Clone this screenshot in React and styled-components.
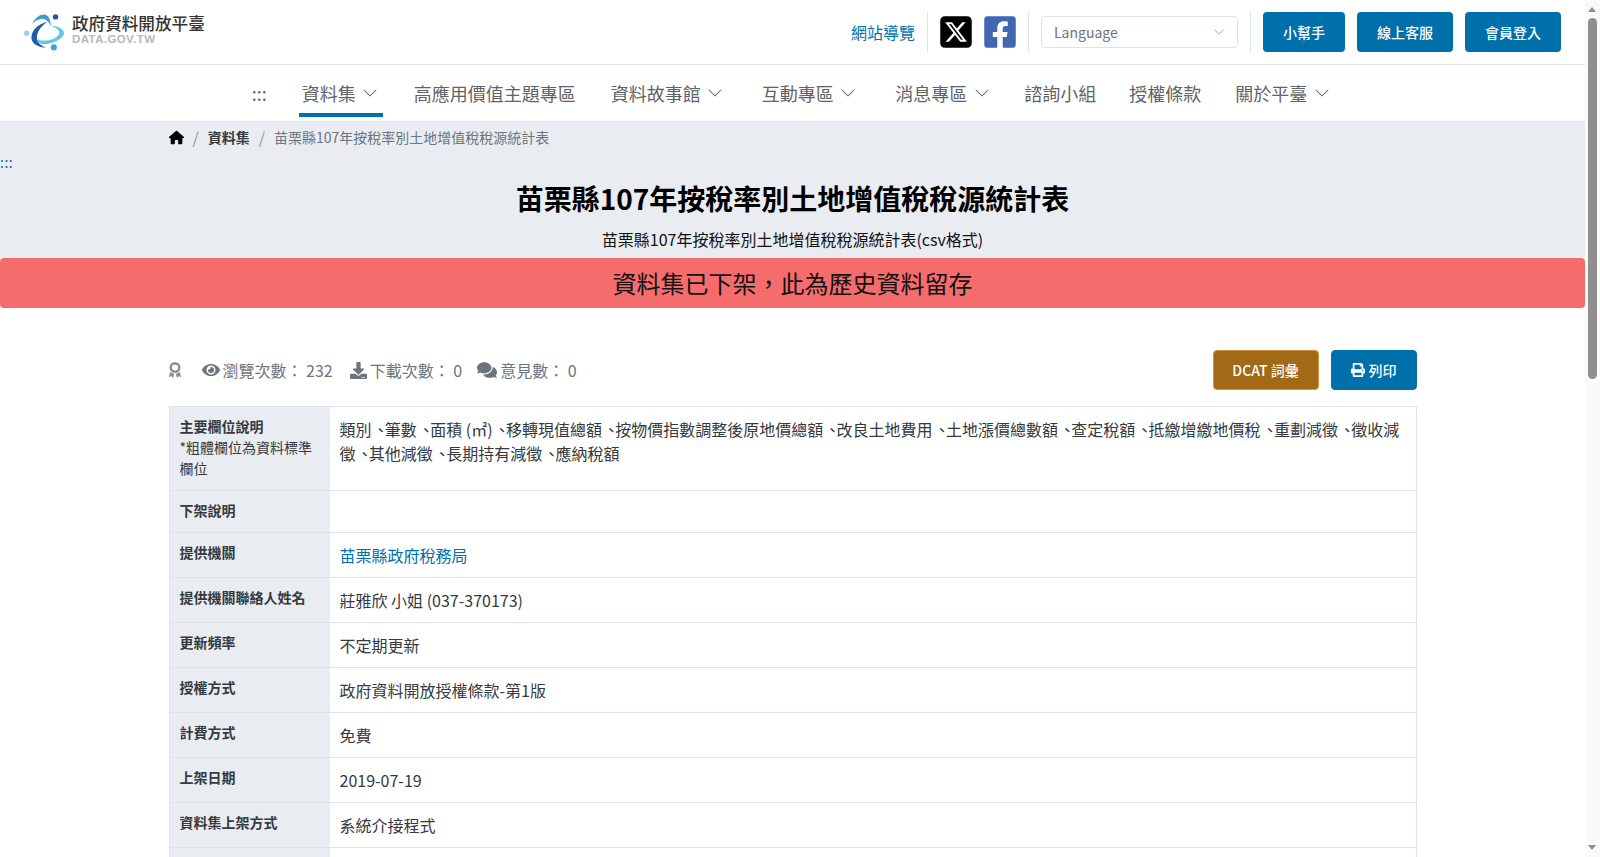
import styled, { createGlobalStyle } from 'styled-components';
import { FaSquareXTwitter, FaHouse } from 'react-icons/fa6';
import { FaFacebookSquare, FaEye, FaDownload, FaComments, FaPrint } from 'react-icons/fa';
import { BsChevronDown } from 'react-icons/bs';

const GlobalStyle = createGlobalStyle`
  html, body { margin: 0; padding: 0; background: #fff; overflow: hidden; }
  body { font-family: "Noto Sans CJK TC", "Noto Sans", sans-serif; color: #343a40; }
  * { box-sizing: border-box; }
`;

const Page = styled.div`
  height: 100vh;
  overflow: hidden;
  padding-right: 15px;
`;
const ScrollTrack = styled.div`
  position: fixed;
  top: 0;
  right: 0;
  bottom: 0;
  width: 15px;
  padding: 7px 3px;
  background: #fafafa;
  display: flex;
  flex-direction: column;
  align-items: flex-start;
`;
const ScrollArrow = styled.div`
  width: 0;
  height: 0;
  border-left: 4.5px solid transparent;
  border-right: 4.5px solid transparent;
  border-${p => (p.$down ? 'top' : 'bottom')}: 5px solid #8f8f8f;
  margin-top: ${p => (p.$down ? 'auto' : '0')};
`;
const ScrollThumb = styled.div`
  width: 9px;
  height: 361px;
  margin-top: 6px;
  border-radius: 5px;
  background: #8f8f8f;
`;
const TopBar = styled.div`
  display: flex;
  align-items: center;
  justify-content: space-between;
  height: 65px;
  padding: 0 24px;
  border-bottom: 1px solid #dee2ea;
`;
const Logo = styled.div`
  display: flex;
  align-items: center;
  gap: 8px;
`;
const LogoText = styled.div`
  display: flex;
  flex-direction: column;
  padding-bottom: 6px;
  b { font-size: 16.6px; line-height: 20px; font-weight: 500; color: #333; }
  span { font-family: "Liberation Sans", sans-serif; font-weight: 700; font-size: 11.5px; line-height: 12px; color: #b8b8b8; letter-spacing: 0.4px; }
`;
const TopRight = styled.div`
  display: flex;
  align-items: center;
`;
const SiteMap = styled.a`
  color: #0070ab;
  font-size: 16px;
  padding-right: 12px;
`;
const Divider = styled.div`
  width: 1px;
  height: 40px;
  background: #dee2ea;
`;
const Socials = styled.div`
  display: flex;
  align-items: center;
  gap: 8px;
  padding: 0 10px;
`;
const LangSelect = styled.div`
  display: flex;
  align-items: center;
  justify-content: space-between;
  width: 197px;
  height: 32px;
  margin: 0 12px;
  padding: 0 12px;
  border: 1px solid #dee2ea;
  border-radius: 4px;
  font-size: 14px;
  color: #6c757d;
`;
const TopButton = styled.a`
  display: flex;
  align-items: center;
  justify-content: center;
  width: ${p => p.$w}px;
  height: 40px;
  margin-left: 12px;
  border-radius: 4px;
  background: #0070ab;
  color: #fff;
  font-size: 14px;
  font-weight: 500;
`;
const Nav = styled.nav`
  display: flex;
  justify-content: center;
  height: 57px;
  border-bottom: 1px solid #dee2ea;
`;
const NavItem = styled.a`
  display: flex;
  align-items: center;
  height: 52px;
  padding: 8px 2.5px 0;
  margin-right: ${p => p.$after}px;
  color: #5f6368;
  font-size: 18px;
  border-bottom: 4px solid ${p => (p.$active ? '#0070ab' : 'transparent')};
  svg { margin: 0 2px 0 6.5px; }
`;
const Hero = styled.div`
  background: #e9ecf1;
  height: 136px;
`;
const Crumbs = styled.div`
  display: flex;
  align-items: center;
  gap: 8px;
  width: 1248px;
  margin: 0 auto;
  height: 30px;
  font-size: 14px;
  color: #6c757d;
  b { color: #343a40; font-weight: 700; }
  i { font-style: normal; font-size: 16px; color: #999; padding: 0 1px; }
`;
const SkipMark = styled.div`
  height: 25px;
  color: #0070ab;
  font-size: 14px;
  line-height: 21px;
  letter-spacing: 0.5px;
`;
const Title = styled.h1`
  margin: 0;
  text-align: center;
  font-size: 28px;
  line-height: 42px;
  font-weight: 700;
  color: #000;
`;
const SubTitle = styled.p`
  margin: 8px 0 0;
  text-align: center;
  font-size: 16px;
  line-height: 24px;
  color: #111;
`;
const Banner = styled.div`
  height: 50px;
  background: #f56c6c;
  border-radius: 4px;
  text-align: center;
  font-size: 24px;
  line-height: 50px;
  color: #111;
`;
const Main = styled.main`
  width: 1248px;
  margin: 0 auto;
  padding-top: 42px;
`;
const StatsRow = styled.div`
  display: flex;
  align-items: center;
  justify-content: space-between;
  height: 40px;
  margin-bottom: 16px;
`;
const Stats = styled.div`
  display: flex;
  align-items: center;
  color: #6c757d;
  font-size: 16px;
`;
const Stat = styled.span`
  display: flex;
  align-items: center;
  gap: 3px;
  margin-left: ${p => p.$ml}px;
`;
const Actions = styled.div`
  display: flex;
  gap: 12px;
`;
const ActionButton = styled.a`
  display: flex;
  align-items: center;
  justify-content: center;
  gap: 4px;
  width: ${p => p.$w}px;
  height: 40px;
  border-radius: 4px;
  color: #fff;
  font-size: 14px;
  font-weight: 500;
  background: ${p => p.$bg};
  border: 1px solid ${p => p.$border};
`;
const Table = styled.div`
  border: 1px solid #dee2ea;
  border-bottom: none;
`;
const Row = styled.div`
  display: grid;
  grid-template-columns: 160px 1fr;
  min-height: ${p => p.$h}px;
  border-bottom: 1px solid #dee2ea;
`;
const Label = styled.div`
  background: #e9ecf1;
  padding: 9px 10px;
  font-size: 14px;
  line-height: 21px;
  color: #343a40;
  b { font-weight: 700; }
`;
const Value = styled.div`
  padding: 10px;
  font-size: 16px;
  line-height: 24px;
  color: #343a40;
  font-feature-settings: "palt";
  a { color: #0070ab; }
`;

const navItems = [
  { label: ':::', after: 30 },
  { label: '資料集', chevron: true, active: true, after: 28.5 },
  { label: '高應用價值主題專區', after: 30 },
  { label: '資料故事館', chevron: true, after: 31.5 },
  { label: '互動專區', chevron: true, after: 32 },
  { label: '消息專區', chevron: true, after: 27.5 },
  { label: '諮詢小組', after: 28 },
  { label: '授權條款', after: 29 },
  { label: '關於平臺', chevron: true, after: 1.5 },
];

// narrow space before each 、 to get the comma's spacing
const fields = '類別、筆數、面積 (㎡)、移轉現值總額、按物價指數調整後原地價總額、改良土地費用、土地漲價總數額、查定稅額、抵繳增繳地價稅、重劃減徵、徵收減徵、其他減徵、長期持有減徵、應納稅額'.split('、').join('\u2004、');

const rows = [
  ['下架說明', '', 42],
  ['提供機關', <a>苗栗縣政府稅務局</a>, 45],
  ['提供機關聯絡人姓名', '莊雅欣 小姐 (037-370173)', 45],
  ['更新頻率', '不定期更新', 45],
  ['授權方式', '政府資料開放授權條款-第1版', 45],
  ['計費方式', '免費', 45],
  ['上架日期', '2019-07-19', 45],
  ['資料集上架方式', '系統介接程式', 45],
  ['', '', 45],
];

const LogoMark = () => (
  <svg width="40" height="37" viewBox="0 0 118 108">
    <path d="M36 74C60 84 100 74 104 56 106 46 92 38 78 34 100 34 118 44 118 56 118 72 80 90 56 88 46 88 40 82 36 74Z" fill="#62c6ec" />
    <path d="M24 28C34 8 52-2 64 2 74 6 78 20 80 36 72 20 62 12 50 14 40 16 32 20 24 28Z" fill="#3b9ad8" />
    <path d="M70 22C40 28 20 50 22 72 24 88 42 98 66 100 50 92 38 84 38 70 38 52 50 34 70 22Z" fill="#1e5bab" />
    <circle cx="93" cy="8" r="8" fill="#2a55a8" />
    <circle cx="8" cy="56" r="8" fill="#8ed3ef" />
    <circle cx="88" cy="98" r="9" fill="#3aa4de" />
  </svg>
);

const MedalIcon = () => (
  <svg width="12" height="16" viewBox="0 0 12 16" fill="#8a9097">
    <path d="M6 0a5.500 5.500 0 1 0 0 11A5.500 5.500 0 0 0 6 0zm0 2.500a3 3 0 1 1 0 6 3 3 0 0 1 0-6z" />
    <path d="M1 10l-1 5 2.500-.8L4 16l1.200-4zM11 10l1 5-2.500-.8L8 16l-1.200-4z" />
  </svg>
);

const App = () => (
  <Page>
    <GlobalStyle />
    <TopBar>
      <Logo>
        <LogoMark />
        <LogoText>
          <b>政府資料開放平臺</b>
          <span>DATA.GOV.TW</span>
        </LogoText>
      </Logo>
      <TopRight>
        <SiteMap>網站導覽</SiteMap>
        <Divider />
        <Socials>
          <FaSquareXTwitter size={36} color="#000" />
          <FaFacebookSquare size={36} color="#4267b2" />
        </Socials>
        <Divider />
        <LangSelect>
          Language
          <BsChevronDown size={12} color="#aaa" />
        </LangSelect>
        <Divider />
        <TopButton $w={82}>小幫手</TopButton>
        <TopButton $w={96}>線上客服</TopButton>
        <TopButton $w={96}>會員登入</TopButton>
      </TopRight>
    </TopBar>
    <Nav>
      {navItems.map(item => (
        <NavItem key={item.label} $active={item.active} $after={item.after}>
          {item.label}
          {item.chevron && <BsChevronDown size={16} />}
        </NavItem>
      ))}
    </Nav>
    <Hero>
      <Crumbs>
        <FaHouse size={15} color="#000" />
        <i>/</i>
        <b>資料集</b>
        <i>/</i>
        苗栗縣107年按稅率別土地增值稅稅源統計表
      </Crumbs>
      <SkipMark>:::</SkipMark>
      <Title>苗栗縣107年按稅率別土地增值稅稅源統計表</Title>
      <SubTitle>苗栗縣107年按稅率別土地增值稅稅源統計表(csv格式)</SubTitle>
    </Hero>
    <Banner>資料集已下架，此為歷史資料留存</Banner>
    <Main>
      <StatsRow>
        <Stats>
          <MedalIcon />
          <Stat $ml={21}><FaEye size={18} /> 瀏覽次數： 232</Stat>
          <Stat $ml={17}><FaDownload size={17} /> 下載次數： 0</Stat>
          <Stat $ml={15}><FaComments size={20} /> 意見數： 0</Stat>
        </Stats>
        <Actions>
          <ActionButton $w={106} $bg="#a26a16" $border="#d39335">DCAT 詞彙</ActionButton>
          <ActionButton $w={86} $bg="#0070ab" $border="#0070ab"><FaPrint size={14} /> 列印</ActionButton>
        </Actions>
      </StatsRow>
      <Table>
        <Row $h={84}>
          <Label><b>主要欄位說明</b><br />*粗體欄位為資料標準欄位</Label>
          <Value>{fields}</Value>
        </Row>
        {rows.map(([label, value, h], i) => (
          <Row key={i} $h={h}>
            <Label><b>{label}</b></Label>
            <Value>{value}</Value>
          </Row>
        ))}
      </Table>
    </Main>
    <ScrollTrack>
      <ScrollArrow />
      <ScrollThumb />
      <ScrollArrow $down />
    </ScrollTrack>
  </Page>
);

export default App;
